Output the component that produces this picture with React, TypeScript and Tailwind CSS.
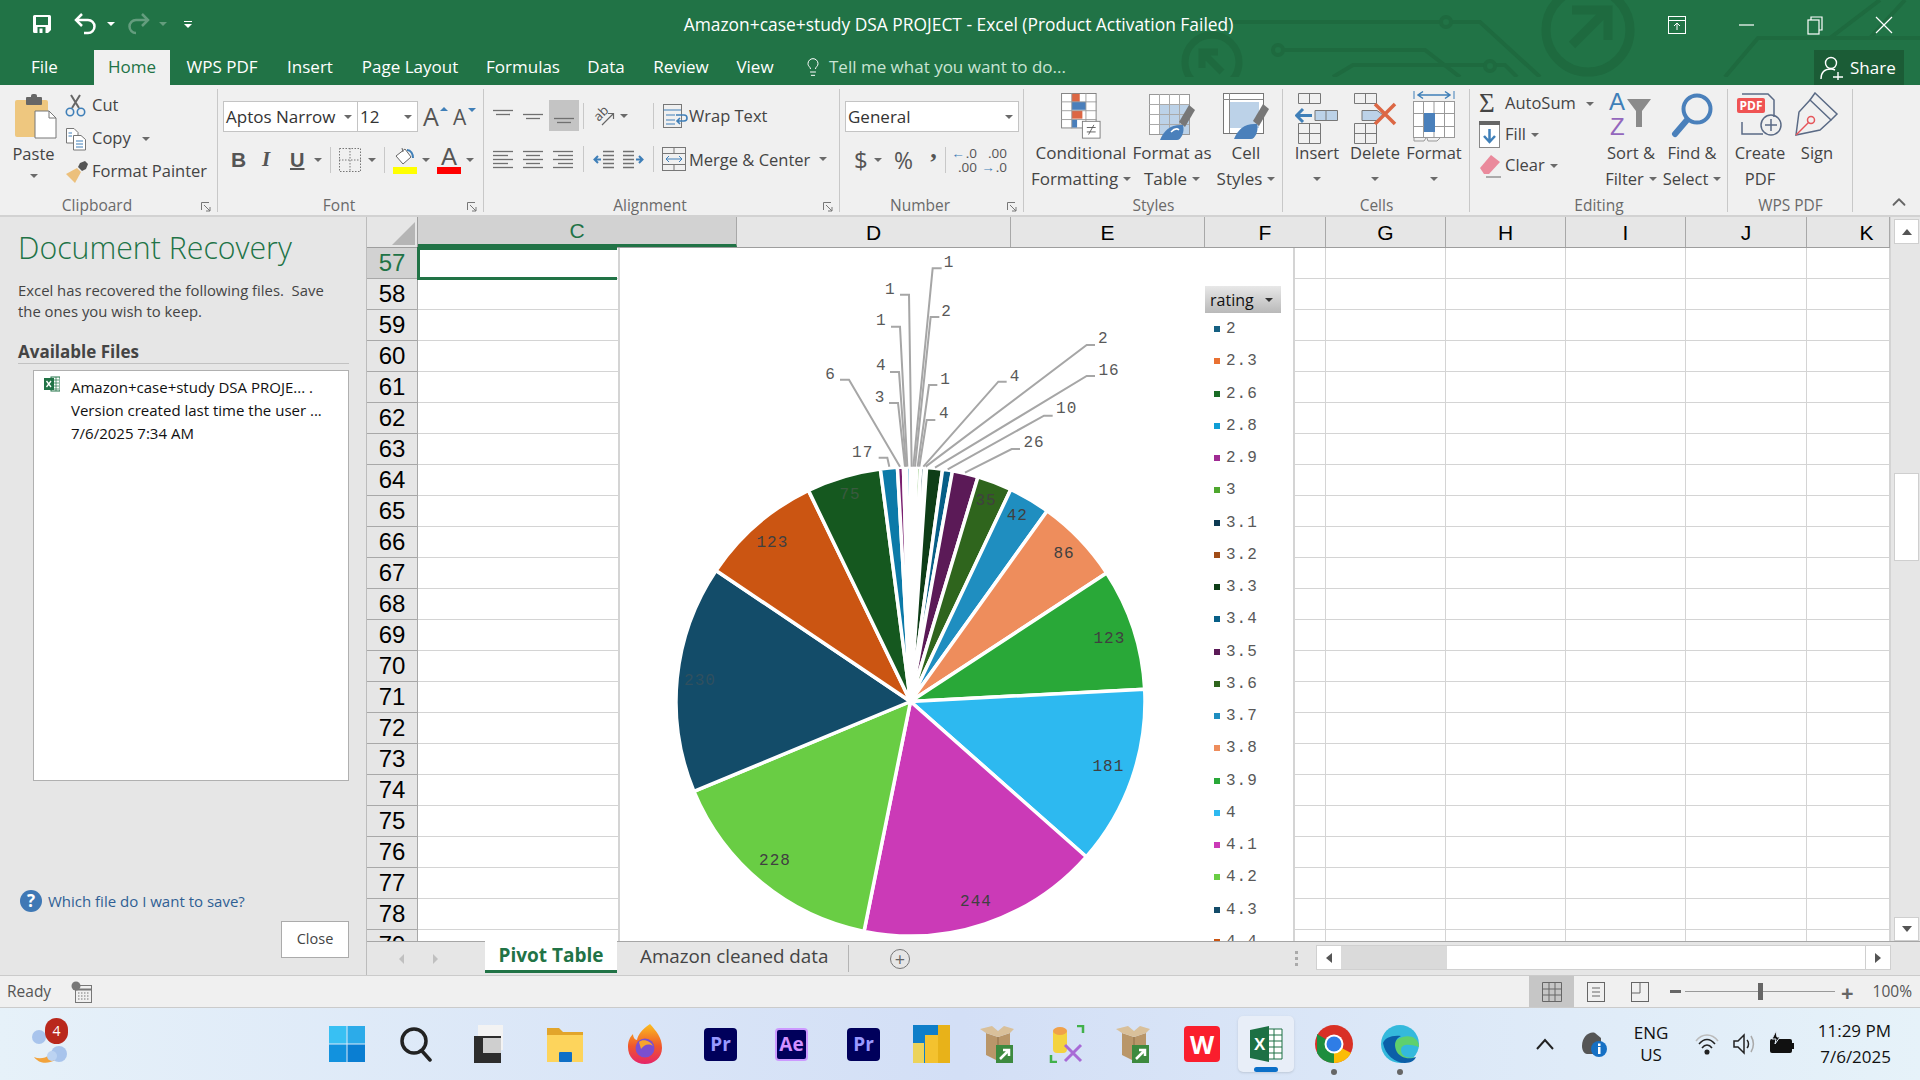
import React from 'react';
import { ChevronUp, Lightbulb } from 'lucide-react';

const Caret = ({ className = '' }: { className?: string }) => (
  <span className={`inline-block w-0 h-0 border-x-[4px] border-x-transparent border-t-[4px] border-t-[#6a6a6a] ${className}`} />
);

/* ---------- title bar ---------- */
const Circuit = () => (
  <svg className="absolute left-0 top-0 pointer-events-none" width="1920" height="77" viewBox="0 0 1920 77" fill="none" stroke="#1e6a3f" strokeWidth="4">
    <path d="M1170 22H1441M1452 22H1480L1540 77" />
    <circle cx="1446" cy="22" r="5" />
    <circle cx="1278" cy="50" r="5" />
    <path d="M1284 50H1425L1460 77" />
    <path d="M1333 77L1353 65H1485M1496 65H1505L1517 77" />
    <circle cx="1490" cy="66" r="5" />
    <circle cx="1212" cy="62" r="27" strokeWidth="7" />
    <path d="M1222 72L1204 54M1202 68V52H1218" strokeWidth="7" />
    <circle cx="1588" cy="30" r="42" strokeWidth="9" />
    <path d="M1572 45L1606 11M1572 10H1608V40" strokeWidth="9" />
    <path d="M1725 77L1758 38H1920M1830 38L1880 0M1870 38L1905 0" />
  </svg>
);

const TitleBar = () => (
  <div className="relative h-[50px] flex items-center">
    <div className="absolute left-[32px] top-[12px] flex items-center">
      <svg width="20" height="20" viewBox="0 0 20 20">
        <path d="M1 2.500A1.500 1.500 0 012.500 1H17.500A1.500 1.500 0 0119 2.500V16L16 19H2.500A1.500 1.500 0 011 17.500Z" fill="#fff" />
        <rect x="4" y="3" width="12" height="8" fill="#217346" />
        <rect x="5.500" y="13" width="8" height="6" fill="#217346" />
        <rect x="7.500" y="14.500" width="3" height="4.500" fill="#fff" />
      </svg>
      <svg className="ml-[22px]" width="23" height="24" viewBox="0 0 23 24" fill="none" stroke="#fff" strokeWidth="2.500">
        <path d="M8 2L2 8L8 14" />
        <path d="M2 8H14A6.500 6.500 0 0114 21H10" />
      </svg>
      <Caret className="ml-[10px] border-t-white" />
      <svg className="ml-[12px] opacity-30" width="23" height="24" viewBox="0 0 23 24" fill="none" stroke="#fff" strokeWidth="2.500">
        <path d="M15 2L21 8L15 14" />
        <path d="M21 8H9A6.500 6.500 0 009 21" />
      </svg>
      <Caret className="ml-[9px] border-t-white opacity-30" />
      <span className="ml-[17px] flex flex-col items-center gap-[2px]">
        <span className="w-[8px] h-[1px] bg-white" />
        <Caret className="border-t-white" />
      </span>
    </div>
    <div className="relative w-full text-center text-[17.400px] text-white pr-[3px] -translate-y-[1px]">
      Amazon+case+study DSA PROJECT - Excel (Product Activation Failed)
    </div>
    <div className="absolute left-[1665px] top-[15px] flex items-center text-white">
      <svg width="24" height="18" viewBox="0 0 24 18" fill="none" stroke="#fff" strokeWidth="1">
        <rect x="3.500" y="0.500" width="17" height="17" />
        <path d="M3.500 4.500H20.500M12 14V7M9 10L12 7L15 10" />
      </svg>
      <svg className="ml-[45px]" width="24" height="18" viewBox="0 0 24 18" stroke="#fff" strokeWidth="1.200">
        <path d="M5 9H20" />
      </svg>
      <svg className="ml-[45px]" width="24" height="20" viewBox="0 0 24 20" fill="none" stroke="#fff" strokeWidth="1.200">
        <rect x="5" y="5" width="11" height="14" />
        <path d="M8 5V2H19V15H16" />
      </svg>
      <svg className="ml-[45px]" width="24" height="20" viewBox="0 0 24 20" fill="none" stroke="#fff" strokeWidth="1.200">
        <path d="M4 2L20 18M20 2L4 18" />
      </svg>
    </div>
  </div>
);

const tabs = [
  ['File', 'w-[94px] pl-[31px]'],
  ['Home', 'w-[76px] justify-center'],
  ['WPS PDF', 'w-[104px] justify-center'],
  ['Insert', 'w-[72px] justify-center'],
  ['Page Layout', 'w-[128px] justify-center'],
  ['Formulas', 'w-[98px] justify-center'],
  ['Data', 'w-[68px] justify-center'],
  ['Review', 'w-[82px] justify-center'],
  ['View', 'w-[66px] justify-center'],
];

const TabRow = () => (
  <div className="relative flex h-[35px] text-[17px] text-white">
    {tabs.map(([name, cls]) => (
      <div key={name} className={`flex items-center pb-[2px] ${cls} ${name === 'Home' ? 'bg-[#f0f0f0] text-[#217346]' : ''}`}>
        {name}
      </div>
    ))}
    <div className="flex items-center pb-[2px] ml-[15px] text-[#c9e4d4]">
      <Lightbulb size={20} strokeWidth={1.200} color="#fff" />
      <span className="ml-[6px]">Tell me what you want to do...</span>
    </div>
    <div className="ml-auto mr-[16px] w-[90px] bg-[#1b5c36] flex items-center pl-[6px] gap-[6px]">
      <svg width="24" height="24" viewBox="0 0 24 24" fill="none" stroke="#fff" strokeWidth="1.400">
        <circle cx="11" cy="7" r="5.500" />
        <path d="M1 23C1 16 5 13 11 13C13 13 14 13.500 15 14M13 21H23M18 16V26" />
      </svg>
      Share
    </div>
  </div>
);

/* ---------- ribbon ---------- */
const Launcher = () => (
  <svg className="absolute right-[7px] bottom-[3px]" width="10" height="10" viewBox="0 0 10 10" fill="none" stroke="#777" strokeWidth="1">
    <path d="M0.500 8V0.500H8M3 3L9 9M5 9H9V5" />
  </svg>
);

const Group = ({ label, width, launcher, children }: { label: string; width: string; launcher?: boolean; children: React.ReactNode }) => (
  <div className={`relative flex flex-col h-full ${width} pt-[4px]`}>
    <div className="flex-1 flex min-h-0">{children}</div>
    <div className={`h-[22px] text-center text-[15.500px] leading-[24px] text-[#6a6a6a] ${launcher ? 'pr-[24px]' : ''}`}>{label}</div>
    {launcher && <Launcher />}
    <div className="absolute right-0 top-[4px] bottom-[3px] w-[1px] bg-[#c8c8c8]" />
  </div>
);

const Big = ({ icon, l1, l2, width, caret = true }: { icon: React.ReactNode; l1: string; l2?: string; width: string; caret?: boolean }) => (
  <div className={`flex flex-col items-center shrink-0 ${width}`}>
    <div className="h-[52px] flex items-center justify-center">{icon}</div>
    <div className="h-[25px] leading-[24px] whitespace-nowrap">{l1}</div>
    <div className="h-[25px] leading-[24px] whitespace-nowrap flex items-center justify-center gap-[5px]">
      {l2}
      {caret && <Caret />}
    </div>
  </div>
);

const Lines = ({ rows, w = 20, h = 20, y0 = 2, step = 4 }: { rows: [number, number][]; w?: number; h?: number; y0?: number; step?: number }) => (
  <svg width={w} height={h} viewBox={`0 0 ${w} ${h}`} stroke="#707070" strokeWidth="1.300">
    {rows.map(([a, b], i) => (
      <line key={i} x1={a} x2={b} y1={y0 + i * step + 0.5} y2={y0 + i * step + 0.5} />
    ))}
  </svg>
);

const Combo = ({ text, width }: { text: string; width: string }) => (
  <div className={`h-[31px] ${width} bg-white border border-[#c4c4c4] flex items-center justify-between pl-[2px] pr-[5px] text-[17px] text-[#333]`}>
    {text}
    <Caret />
  </div>
);

const Sep = ({ className = '' }: { className?: string }) => <span className={`inline-block w-[1px] h-[26px] bg-[#c8c8c8] ${className}`} />;

const Clipboard = () => (
  <Group label="Clipboard" width="w-[218px]" launcher>
    <div className="w-[65px] flex flex-col items-center pl-[2px]">
      <svg className="mt-[5px] ml-[5px]" width="42" height="45" viewBox="0 0 42 45">
        <rect x="0" y="6" width="33" height="37" rx="2" fill="#eec77f" />
        <rect x="11" y="3" width="16" height="8" rx="1" fill="#666" />
        <rect x="16" y="0" width="6" height="6" rx="2" fill="#666" />
        <path d="M20 17H34L41 24V44H20Z" fill="#fff" stroke="#777" />
        <path d="M34 17V24H41" fill="none" stroke="#777" />
      </svg>
      <div className="mt-[2px] h-[25px] leading-[25px]">Paste</div>
      <Caret className="mt-[8px]" />
    </div>
    <div className="flex flex-col">
      {[
        [
          <svg key="c" width="21" height="23" viewBox="0 0 21 23" fill="none">
            <path d="M7 14L15 1M14 14L6 1" stroke="#666" strokeWidth="2" />
            <circle cx="5" cy="18" r="3.700" stroke="#3f7fb8" strokeWidth="1.600" />
            <circle cx="16" cy="18" r="3.700" stroke="#3f7fb8" strokeWidth="1.600" />
          </svg>,
          'Cut',
        ],
        [
          <svg key="p" width="22" height="24" viewBox="0 0 22 24" fill="#fff" stroke="#777">
            <path d="M1.500 1.500H9L13 5.500V16H1.500Z" />
            <path d="M8.500 8.500H16L20.500 12.500V23H8.500Z" />
            <path d="M11 14H18M11 17H18M11 20H18" stroke="#3f7fb8" />
            <path d="M3.500 6H7M3.500 9H7" stroke="#3f7fb8" />
          </svg>,
          'Copy',
        ],
        [
          <svg key="f" width="24" height="24" viewBox="0 0 24 24">
            <path d="M15 3L20 1L23 4L21 9L17 11L13 7Z" fill="#555" />
            <path d="M12 8L16 12L10 23L1 14Z" fill="#ecc07c" />
          </svg>,
          'Format Painter',
        ],
      ].map(([icon, text], i) => (
        <div key={i} className="h-[33px] flex items-center">
          <div className="w-[27px]">{icon}</div>
          <span>{text as string}</span>
          {i === 1 && <Caret className="ml-[11px]" />}
        </div>
      ))}
    </div>
  </Group>
);

const Bucket = () => (
  <svg width="24" height="20" viewBox="0 0 24 20">
    <path d="M3 9L12 2L18 10L10 17Z" fill="#fff" stroke="#666" />
    <path d="M9 1L10 5" stroke="#666" />
    <path d="M14 3C18 3 20 7 20 11" fill="none" stroke="#3f7fb8" strokeWidth="2" />
  </svg>
);

const FontGroup = () => (
  <Group label="Font" width="w-[266px]" launcher>
    <div className="pl-[5px] pt-[12px] flex flex-col">
      <div className="flex items-center">
        <Combo text="Aptos Narrow" width="w-[135px]" />
        <Combo text="12" width="w-[61px] -ml-[1px]" />
        <span className="relative ml-[5px] w-[22px] text-[25px] leading-none text-[#555]">
          A
          <span className="absolute right-[-3px] top-[3px] w-0 h-0 border-x-[4px] border-x-transparent border-b-[4px] border-b-[#3f7fb8]" />
        </span>
        <span className="relative ml-[8px] w-[20px] text-[21px] leading-none text-[#555] pt-[2px]">
          A
          <span className="absolute right-[-3px] top-[3px] w-0 h-0 border-x-[4px] border-x-transparent border-t-[4px] border-t-[#3f7fb8]" />
        </span>
      </div>
      <div className="mt-[13px] h-[30px] flex items-center text-[#555]">
        <span className="ml-[8px] w-[31px] text-[21px] font-bold font-['Liberation_Sans',sans-serif]">B</span>
        <span className="w-[28px] text-[21px] italic font-['Liberation_Serif',serif] font-bold">I</span>
        <span className="w-[22px] text-[20px] font-bold underline font-['Liberation_Sans',sans-serif]">U</span>
        <Caret className="ml-[2px]" />
        <Sep className="ml-[8px]" />
        <svg className="ml-[8px]" width="22" height="24" viewBox="0 0 22 24" fill="none" stroke="#777" strokeDasharray="1.500 1.500">
          <rect x="0.500" y="0.500" width="21" height="23" />
          <path d="M11 0V24M0 12H22" />
        </svg>
        <Caret className="ml-[7px]" />
        <Sep className="ml-[8px]" />
        <span className="ml-[8px] w-[24px] flex flex-col">
          <Bucket />
          <span className="h-[7px] bg-[#ffff00]" />
        </span>
        <Caret className="ml-[5px]" />
        <span className="ml-[7px] w-[24px] flex flex-col items-center text-[#555]">
          <span className="h-[20px] text-[24px] leading-[20px] font-['Liberation_Sans',sans-serif]">A</span>
          <span className="w-full h-[7px] bg-[#ff0000]" />
        </span>
        <Caret className="ml-[5px]" />
      </div>
    </div>
  </Group>
);

const Alignment = () => (
  <Group label="Alignment" width="w-[356px]" launcher>
    <div className="pl-[9px] pt-[11px] flex flex-col">
      <div className="flex items-center h-[31px]">
        <span className="w-[30px]"><Lines rows={[[0, 20], [3, 17]]} y0={4} /></span>
        <span className="w-[26px]"><Lines rows={[[0, 20], [3, 17]]} y0={8} /></span>
        <span className="w-[30px] h-[31px] bg-[#c4c4c4] flex items-center justify-center"><Lines rows={[[0, 20], [3, 17]]} y0={12} /></span>
        <Sep className="ml-[4px]" />
        <span className="relative ml-[9px] w-[22px] h-[22px] block">
          <span className="absolute left-[0px] top-[0px] -rotate-45 text-[13px] leading-[16px] text-[#555]">ab</span>
          <svg className="absolute left-0 top-0" width="22" height="22" viewBox="0 0 22 22" fill="none" stroke="#666" strokeWidth="1.200">
            <path d="M9 20L20 9M15 8.500H20.500V14" />
          </svg>
        </span>
        <Caret className="ml-[5px]" />
        <Sep className="ml-[25px] -mr-[1px]" />
        <svg className="ml-[9px]" width="26" height="26" viewBox="0 0 26 26" fill="none" stroke="#777">
          <rect x="1.500" y="1.500" width="18" height="23" />
          <path d="M1.500 7H19M4 12H13M4 17H13M4 21H13" stroke="#3f7fb8" />
          <path d="M14 12H22A3 3 0 0122 18H15M18 15L15 18L18 21" stroke="#3f7fb8" strokeWidth="1.600" />
        </svg>
        <span className="ml-[1px] pt-[2px]">Wrap Text</span>
      </div>
      <div className="mt-[13px] flex items-center h-[30px]">
        <span className="w-[30px]"><Lines rows={[[0, 20], [0, 15], [0, 20], [0, 15], [0, 20]]} /></span>
        <span className="w-[30px]"><Lines rows={[[0, 20], [3, 17], [0, 20], [3, 17], [0, 20]]} /></span>
        <span className="w-[26px]"><Lines rows={[[0, 20], [5, 20], [0, 20], [5, 20], [0, 20]]} /></span>
        <Sep className="ml-[4px]" />
        <svg className="ml-[9px]" width="21" height="20" viewBox="0 0 21 20" fill="none" stroke="#707070" strokeWidth="1.300">
          <path d="M10 2.500H21M10 6.500H21M10 10.500H21M10 14.500H21M10 18.500H21" />
          <path d="M8 10.500H2M5 7L1.500 10.500L5 14" stroke="#3f7fb8" strokeWidth="2" />
        </svg>
        <svg className="ml-[9px]" width="21" height="20" viewBox="0 0 21 20" fill="none" stroke="#707070" strokeWidth="1.300">
          <path d="M0 2.500H11M0 6.500H11M0 10.500H11M0 14.500H11M0 18.500H11" />
          <path d="M13 10.500H19M16 7L19.500 10.500L16 14" stroke="#3f7fb8" strokeWidth="2" />
        </svg>
        <Sep className="ml-[9px]" />
        <svg className="ml-[8px]" width="24" height="26" viewBox="0 0 24 26" fill="none" stroke="#777">
          <rect x="0.500" y="1.500" width="23" height="23" />
          <path d="M0 7.500H24M0 18.500H24M12 1.500V7.500M12 18.500V24.500" />
          <path d="M4 13H20M7 10L4 13L7 16M17 10L20 13L17 16" stroke="#3f7fb8" />
        </svg>
        <span className="ml-[3px] pt-[2px]">Merge &amp; Center</span>
        <Caret className="ml-[9px]" />
      </div>
    </div>
  </Group>
);

const Decimal = ({ top, bottom, flip }: { top: string; bottom: string; flip?: boolean }) => (
  <span className="flex flex-col items-end gap-[1px] text-[13.500px] leading-[13px] text-[#555] w-[24px]">
    <span className="flex h-[13px] items-center">{!flip && <span className="text-[#3f7fb8] font-bold mr-[1px]">←</span>}{top}</span>
    <span className="flex h-[13px] items-center">{flip && <span className="text-[#3f7fb8] font-bold mr-[1px]">→</span>}{bottom}</span>
  </span>
);

const NumberGroup = () => (
  <Group label="Number" width="w-[184px]" launcher>
    <div className="pl-[5px] pt-[12px] flex flex-col">
      <Combo text="General" width="w-[174px]" />
      <div className="mt-[13px] h-[30px] flex items-center text-[#555]">
        <span className="ml-[9px] w-[20px] text-[24px] leading-none">$</span>
        <Caret />
        <span className="ml-[12px] w-[28px] text-[23px] leading-none">%</span>
        <span className="ml-[7px] w-[15px] text-[26px] leading-none font-bold font-['Liberation_Serif',serif] translate-y-[3px]">’</span>
        <Sep className="ml-[1px]" />
        <span className="ml-[7px]"><Decimal top=".0" bottom=".00" /></span>
        <span className="ml-[6px]"><Decimal top=".00" bottom=".0" flip /></span>
      </div>
    </div>
  </Group>
);

const CondIcon = () => (
  <svg width="41" height="46" viewBox="0 0 46 52" fill="none" className="translate-y-[1px]">
    <rect x="0.500" y="0.500" width="39" height="39" fill="#fff" stroke="#777" />
    <rect x="12" y="1" width="9" height="9" fill="#dc6744" />
    <rect x="12" y="10" width="16" height="9" fill="#4a7fbb" />
    <rect x="12" y="20" width="12" height="9" fill="#dc6744" />
    <rect x="12" y="30" width="6" height="9" fill="#4a7fbb" />
    <path d="M0 10H40M0 20H40M0 30H40M12 0V40M28 0V40" stroke="#999" />
    <rect x="24" y="32" width="20" height="19" fill="#fff" stroke="#777" />
    <path d="M29 39H39M29 44H39M37 36L31 47" stroke="#555" />
  </svg>
);

const TableBrush = () => (
  <svg width="46" height="46" viewBox="0 0 46 46" fill="none" className="translate-y-[2px]">
    <rect x="0.500" y="0.500" width="40" height="40" fill="#fff" stroke="#999" />
    <rect x="11" y="11" width="29" height="29" fill="#bcd2e8" />
    <path d="M0 10.500H40M0 20.500H40M0 30.500H40M10.500 0V40M20.500 0V40M30.500 0V40" stroke="#aaa" />
    <path d="M30 28L40 11L46 16L36 33Z" fill="#777" />
    <path d="M11 46C15 36 22 30 34 31C36 38 32 46 28 46Z" fill="#4a80bb" />
    <path d="M22 38C25 35 28 34 30 36" stroke="#fff" strokeWidth="1.500" />
  </svg>
);

const CellStyle = () => (
  <svg width="46" height="46" viewBox="0 0 46 46" fill="none" className="translate-y-[1px]">
    <rect x="0.500" y="0.500" width="40" height="40" fill="#fff" stroke="#777" />
    <rect x="6" y="9" width="30" height="26" fill="#bcd2e8" />
    <path d="M0 6.500H40M6.500 0V40" stroke="#888" />
    <path d="M30 28L40 11L46 16L36 33Z" fill="#777" />
    <path d="M11 46C15 36 22 30 34 31C36 38 32 46 28 46Z" fill="#4a80bb" />
  </svg>
);

const Styles = () => (
  <Group label="Styles" width="w-[259px]">
    <div className="flex pl-[11px] text-[17px]">
      <Big icon={<CondIcon />} l1="Conditional" l2="Formatting" width="w-[92px]" />
      <Big icon={<TableBrush />} l1="Format as" l2="Table" width="w-[90px]" />
      <Big icon={<CellStyle />} l1="Cell" l2="Styles" width="w-[58px]" />
    </div>
  </Group>
);

const InsertIcon = () => (
  <svg width="44" height="52" viewBox="0 0 44 52" fill="none" stroke="#777" className="translate-y-[3px]">
    <path d="M3.500 1.500H25.500V11.500H3.500ZM14.500 1.500V11.500M3.500 31.500H25.500V51.500H3.500ZM14.500 31.500V51.500M3.500 41.500H25.500" />
    <path d="M20 18.500H42.500V28.500H20Z" fill="#bcd2e8" />
    <path d="M31 18.500V28.500" />
    <path d="M17 23.500H2M8 17L1.500 23.500L8 30" stroke="#3f7fb8" strokeWidth="3" />
  </svg>
);

const DeleteIcon = () => (
  <svg width="44" height="52" viewBox="0 0 44 52" fill="none" stroke="#777" className="translate-y-[3px]">
    <path d="M1.500 1.500H23.500V11.500H1.500ZM12.500 1.500V11.500M1.500 31.500H23.500V51.500H1.500ZM12.500 31.500V51.500M1.500 41.500H23.500" />
    <path d="M9 18.500H24L31 23.500L24 28.500H9Z" fill="#bcd2e8" />
    <path d="M22 12L42 32M42 12L22 32" stroke="#dc6744" strokeWidth="3.500" />
  </svg>
);

const FormatIcon = () => (
  <svg width="42" height="54" viewBox="0 0 42 54" fill="none" stroke="#999" className="translate-y-[2px]">
    <path d="M1 1V9M41 1V9" stroke="#3f7fb8" />
    <path d="M6 5H36M10 1.500L5 5L10 8.500M32 1.500L37 5L32 8.500" stroke="#3f7fb8" strokeWidth="1.500" />
    <rect x="0.500" y="11.500" width="41" height="36" fill="#fff" />
    <path d="M0 23.500H41M0 36.500H41M10.500 11V48M31.500 11V48M21 11V48" />
    <rect x="11" y="23" width="11" height="19" fill="#4a80bb" stroke="none" />
    <path d="M1 48V51H11L13 48M14 48L15 51H24L27 48" />
  </svg>
);

const Cells = () => (
  <Group label="Cells" width="w-[187px]">
    <div className="flex pl-[5px]">
      <Big icon={<InsertIcon />} l1="Insert" width="w-[58px]" />
      <Big icon={<DeleteIcon />} l1="Delete" width="w-[58px]" />
      <Big icon={<FormatIcon />} l1="Format" width="w-[60px]" />
    </div>
  </Group>
);

const Editing = () => (
  <Group label="Editing" width="w-[258px]">
    <div className="flex pl-[9px]">
      <div className="w-[122px] flex flex-col -mt-[1px]">
        <div className="h-[31px] flex items-center">
          <span className="w-[26px] text-[27px] leading-none text-[#444] font-['Liberation_Serif',serif]">Σ</span>
          <span className="text-[#444]">AutoSum</span>
          <Caret className="ml-[10px]" />
        </div>
        <div className="h-[31px] flex items-center">
          <svg className="mr-[5px]" width="21" height="27" viewBox="0 0 21 27" fill="none">
            <rect x="0.500" y="0.500" width="20" height="26" fill="#fff" stroke="#888" />
            <rect x="0" y="0" width="21" height="4" fill="#666" />
            <path d="M10.500 8V21M5 15L10.500 21L16 15" stroke="#3f7fb8" strokeWidth="2.500" />
          </svg>
          Fill
          <Caret className="ml-[5px]" />
        </div>
        <div className="h-[31px] flex items-center">
          <svg className="mr-[4px]" width="22" height="24" viewBox="0 0 22 24">
            <path d="M1 14L12 1L21 8L10 20H5Z" fill="#ea8a9c" />
            <path d="M7 23H22" stroke="#666" />
          </svg>
          Clear
          <Caret className="ml-[5px]" />
        </div>
      </div>
      <Big
        width="w-[60px]"
        l1="Sort &"
        l2="Filter"
        icon={
          <span className="relative flex w-[48px] h-[48px]">
            <span className="absolute left-[2px] top-[-3px] text-[24px] leading-[28px] text-[#3f7fb8] font-['Liberation_Sans',sans-serif]">A</span>
            <span className="absolute left-[3px] top-[23px] text-[24px] leading-[26px] text-[#9467bd] font-['Liberation_Sans',sans-serif]">Z</span>
            <svg className="absolute left-[20px] top-[8px]" width="24" height="28" viewBox="0 0 24 28">
              <path d="M0 0H24L15 12V28H9V12Z" fill="#8a8a8a" />
            </svg>
          </span>
        }
      />
      <Big
        width="w-[62px]"
        l1="Find &"
        l2="Select"
        icon={
          <svg width="42" height="46" viewBox="0 0 42 46" fill="none" stroke="#4a80bb">
            <circle cx="26" cy="17" r="13.500" strokeWidth="4" />
            <path d="M16 28L4 42" strokeWidth="6" strokeLinecap="round" />
          </svg>
        }
      />
    </div>
  </Group>
);

const Wps = () => (
  <Group label="WPS PDF" width="w-[125px]">
    <div className="flex pl-[7px]">
      <Big
        width="w-[50px]"
        caret={false}
        l1="Create"
        l2="PDF"
        icon={
          <span className="relative w-[46px] h-[46px] block">
            <svg className="absolute left-0 top-0" width="46" height="46" viewBox="0 0 46 46" fill="none" stroke="#5a6a85" strokeWidth="1.500">
              <path d="M5 2H31L37 8V25M26 42H5V30" />
              <circle cx="34" cy="33" r="10" />
              <path d="M34 27V39M28 33H40" />
            </svg>
            <span className="absolute left-0 top-[6px] w-[28px] h-[15px] rounded-[2px] bg-[#ef5353] text-white text-[12px] leading-[15px] text-center font-bold">PDF</span>
          </span>
        }
      />
      <Big
        width="w-[64px]"
        caret={false}
        l1="Sign"
        icon={
          <svg width="44" height="46" viewBox="0 0 44 46" fill="none" stroke="#5a6a85" strokeWidth="1.500">
            <path d="M20 1L42 22L36 28L15 8Z" />
            <path d="M15 8L4 20L1 43L25 38L36 28" />
            <path d="M1 43L14 30" stroke="#e5555a" />
            <circle cx="16" cy="28" r="3.500" stroke="#e5555a" />
          </svg>
        }
      />
    </div>
  </Group>
);

const Ribbon = () => (
  <div className="relative h-[132px] bg-[#f0f0f0] border-b-2 border-[#d2d2d2] flex text-[16.500px] text-[#444]">
    <Clipboard />
    <FontGroup />
    <Alignment />
    <NumberGroup />
    <Styles />
    <Cells />
    <Editing />
    <Wps />
    <ChevronUp className="absolute right-[10px] bottom-[2px]" size={22} strokeWidth={2} color="#666" />
  </div>
);

/* ---------- recovery pane ---------- */
const Recovery = () => (
  <div className="w-[367px] shrink-0 bg-[#e6e6e6] flex flex-col pl-[18px] pr-[17px] text-[#444] border-r border-[#bcbcbc]">
    <div className="mt-[12px] h-[38px] leading-[38px] text-[30.300px] font-light text-[#217346]">Document Recovery</div>
    <div className="mt-[13px] text-[14.850px] leading-[21px]">
      Excel has recovered the following files.&nbsp; Save
      <br />
      the ones you wish to keep.
    </div>
    <div className="mt-[20px] pb-[1px] font-bold text-[17px] leading-[20px] border-b border-[#c2c2c2]">Available Files</div>
    <div className="mt-[6px] ml-[15px] h-[411px] bg-white border border-[#b0b0b0] flex pt-[5px] pl-[10px]">
      <svg className="shrink-0" width="16" height="16" viewBox="0 0 16 16">
        <rect x="7" y="1" width="9" height="14" fill="#fff" stroke="#217346" />
        <path d="M9 4H15M9 7H15M9 10H15M9 13H15M12 1V15" stroke="#217346" strokeWidth="0.700" />
        <rect x="0" y="2" width="10" height="12" fill="#217346" />
        <path d="M2.500 5L7 11M7 5L2.500 11" stroke="#fff" strokeWidth="1.300" />
      </svg>
      <div className="ml-[11px] text-[15px] leading-[23px] text-[#111] whitespace-nowrap">
        <div>Amazon+case+study DSA PROJE... .</div>
        <div>Version created last time the user ...</div>
        <div>7/6/2025 7:34 AM</div>
      </div>
    </div>
    <div className="mt-[109px] flex items-center text-[15px] text-[#2f5f94]">
      <span className="ml-[2px] mr-[6px] w-[22px] h-[22px] rounded-full bg-[#3f78b5] text-white font-bold text-[17px] leading-[22px] text-center">?</span>
      Which file do I want to save?
    </div>
    <div className="mt-[8px] self-end ml-auto w-[68px] h-[37px] bg-white border border-[#ababab] flex items-center justify-center text-[14.500px]">Close</div>
  </div>
);

/* ---------- sheet ---------- */
const colTemplate = 'grid-cols-[51px_319px_274px_194px_121px_120px_120px_120px_121px_83px]';
const cols = ['C', 'D', 'E', 'F', 'G', 'H', 'I', 'J', 'K'];
const rowNums = Array.from({ length: 23 }, (_, i) => 57 + i);
const arial = "font-['Liberation_Sans',sans-serif]";

const counts = [1, 1, 1, 2, 1, 4, 4, 2, 16, 10, 26, 35, 42, 86, 123, 181, 244, 228, 230, 123, 75, 17, 6, 3, 4];
const sliceColors = [
  '#156082', '#e97132', '#196b24', '#0f9ed5', '#a02b93', '#4ea72e',
  '#0c3a52', '#a04c17', '#0e3d17', '#075f87', '#5b1a57', '#2f651d',
  '#1f8ec0', '#ee8d5c', '#29a838', '#2db9f0', '#cb3ab7', '#69cd44',
  '#134c69', '#cb5512', '#15581f', '#0c7aa8', '#7a2070', '#3e8625', '#44a9d2',
];
const legend = ['2', '2.3', '2.6', '2.8', '2.9', '3', '3.1', '3.2', '3.3', '3.4', '3.5', '3.6', '3.7', '3.8', '3.9', '4', '4.1', '4.2', '4.3', '4.4'];

const cx = 910.5;
const cy = 701.5;
const radius = 234.5;
const total = counts.reduce((s, c) => s + c, 0);

const polar = (a: number) => `${cx + radius * Math.sin(a)} ${cy - radius * Math.cos(a)}`;
const slices = counts.reduce<{ d: string; end: number }[]>((acc, c) => {
  const start = acc.length ? acc[acc.length - 1].end : 0;
  const end = start + (c / total) * Math.PI * 2;
  acc.push({ d: `M${cx} ${cy}L${polar(start)}A${radius} ${radius} 0 ${end - start > Math.PI ? 1 : 0} 1 ${polar(end)}Z`, end });
  return acc;
}, []);

// inner labels, position in the pie's own crop (660,440 at 3x)
const inner: [string, number, number, string?][] = [
  ['75', 570, 165, '#3a5a3f'], ['35', 978, 183], ['42', 1072, 228], ['86', 1212, 342], ['123', 1348, 597], ['181', 1345, 981],
  ['244', 948, 1386], ['228', 345, 1263], ['230', 120, 722, '#30505f'], ['123', 337, 308],
];

// outer labels: text, text x/y, then leader points, position in the crop at (780,240) 3x
const outer: [string, number, number, number[]][] = [
  ['1', 507, 68, [485, 85, 458, 85, 400, 680]],
  ['2', 500, 215, [478, 231, 452, 231, 405, 680]],
  ['1', 497, 420, [472, 435, 447, 435, 413, 680]],
  ['4', 493, 522, [466, 540, 440, 540, 418, 680]],
  ['4', 705, 410, [680, 425, 655, 425, 430, 680]],
  ['2', 970, 296, [945, 315, 920, 315, 437, 680]],
  ['16', 987, 392, [945, 408, 920, 408, 465, 683]],
  ['10', 860, 508, [818, 527, 792, 527, 503, 688]],
  ['26', 762, 610, [720, 627, 695, 627, 555, 698]],
  ['1', 331, 150, [360, 164, 387, 164, 395, 680]],
  ['1', 304, 242, [333, 260, 360, 260, 382, 680]],
  ['4', 304, 378, [330, 396, 357, 396, 378, 680]],
  ['3', 300, 473, [327, 489, 354, 489, 375, 680]],
  ['6', 152, 404, [180, 419, 207, 419, 360, 680]],
  ['17', 248, 638, [296, 653, 322, 653, 328, 680]],
];

const mono = "'Liberation Mono', monospace";

const Chart = () => (
  <div className="absolute left-[251px] top-[31px] w-[677px] h-[693px] bg-white shadow-[inset_2px_0_0_#d4d4d4,inset_-2px_0_0_#d4d4d4] overflow-hidden">
    <svg width="677" height="693" viewBox="618 248 677 693" fontFamily={mono} fontSize="16" letterSpacing="1">
      {slices.map((s, i) => (
        <path key={i} d={s.d} fill={sliceColors[i]} stroke="#fff" strokeWidth="3.500" strokeLinejoin="round" />
      ))}
      {outer.map(([t, x, y, pts], i) => (
        <g key={i}>
          <polyline
            points={pts.map((v, j) => (j % 2 === 0 ? 780 + v / 3 : 240 + v / 3)).join(' ')}
            fill="none"
            stroke="#a6a6a6"
            strokeWidth="2"
          />
          <text x={780 + x / 3} y={240 + y / 3} textAnchor="middle" dominantBaseline="central" fill="#595959">
            {t}
          </text>
        </g>
      ))}
      {inner.map(([t, x, y, c], i) => (
        <text key={i} x={660 + x / 3} y={440 + y / 3} textAnchor="middle" dominantBaseline="central" fill={c ?? '#404040'}>
          {t}
        </text>
      ))}
    </svg>
    <div className="absolute left-[587px] top-[38px] w-[76px]">
      <div className="h-[27px] bg-gradient-to-b from-[#e8e8e8] to-[#b9b9b9] flex items-center justify-between pl-[5px] pr-[8px] text-[16px] text-[#111]">
        rating
        <Caret className="border-t-[#333]" />
      </div>
      <div className="flex flex-col">
        {legend.map((l, i) => (
          <div key={l} className="h-[32.250px] shrink-0 flex items-center pl-[9px] text-[16px] tracking-[1px] text-[#595959] font-['Liberation_Mono',monospace]">
            <span className="w-[6px] h-[6px] mr-[6px]" style={{ backgroundColor: sliceColors[i] }} />
            {l}
          </div>
        ))}
      </div>
    </div>
  </div>
);

const Grid = () => (
  <div className="relative flex-1 min-w-0 flex flex-col h-[724px]">
    <div className={`grid ${colTemplate} grid-rows-[30px] h-[31px] bg-[#e6e6e6] border-b border-[#9e9e9e] ${arial} text-[21px] leading-none text-black`}>
      <div className="relative border-r border-[#9e9e9e]">
        <span className="absolute right-[2px] bottom-[2px] w-0 h-0 border-l-[23px] border-l-transparent border-b-[23px] border-b-[#b5b5b5]" />
      </div>
      {cols.map((c) => (
        <div key={c} className={`flex items-center justify-center border-r border-[#a8a8a8] ${c === 'C' ? 'bg-[#d2d2d2] text-[#217346] border-b-[3px] border-b-[#217346]' : ''} ${c === 'K' ? 'pl-[37px]' : ''}`}>
          {c}
        </div>
      ))}
    </div>
    <div className="h-[693px] overflow-hidden">
      {rowNums.map((n) => (
        <div key={n} className={`grid ${colTemplate} grid-rows-[31px] h-[31px] shrink-0`}>
          <div className={`flex items-center justify-center border-r border-b border-[#a8a8a8] ${arial} text-[24px] leading-none ${n === 57 ? 'bg-[#d2d2d2] text-[#217346]' : 'bg-[#e6e6e6] text-black'}`}>
            {n}
          </div>
          {cols.map((c) => (
            <div key={c} className="bg-white border-r border-b border-[#d4d4d4]" />
          ))}
        </div>
      ))}
    </div>
    <div className="absolute left-[50px] top-[30px] w-[200px] h-[33px] border-y-[3px] border-l-[3px] border-[#217346]" />
    <Chart />
  </div>
);

const VScroll = () => (
  <div className="w-[30px] h-[724px] bg-[#e6e6e6] flex flex-col items-center pt-[2px] pl-[2px] border-l border-[#d4d4d4]">
    <div className="w-[25px] h-[25px] bg-white border border-[#cfcfcf] flex items-center justify-center">
      <span className="w-0 h-0 border-x-[5px] border-x-transparent border-b-[6px] border-b-[#555]" />
    </div>
    <div className="mt-[229px] w-[25px] h-[88px] bg-white border border-[#cfcfcf]" />
    <div className="mt-auto w-[25px] h-[24px] bg-white border border-[#cfcfcf] flex items-center justify-center">
      <span className="w-0 h-0 border-x-[5px] border-x-transparent border-t-[6px] border-t-[#555]" />
    </div>
  </div>
);

const SheetTabs = () => (
  <div className="h-[34px] bg-[#e6e6e6] border-t border-[#a6a6a6] flex text-[19px] text-[#444]">
    <div className="w-[118px] flex items-center pl-[32px] gap-[29px]">
      <span className="w-0 h-0 border-y-[5px] border-y-transparent border-r-[5px] border-r-[#c0c0c0]" />
      <span className="w-0 h-0 border-y-[5px] border-y-transparent border-l-[5px] border-l-[#c0c0c0]" />
    </div>
    <div className="w-[132px] h-[32px] -mt-[1px] bg-white border-b-[3px] border-[#217346] flex items-center justify-center font-bold text-[#217346]">
      Pivot Table
    </div>
    <div className="w-[232px] flex items-center pl-[23px] pb-[4px] text-[18.800px] border-r border-[#b4b4b4] my-[3px]">Amazon cleaned data</div>
    <div className="ml-[41px] mt-[7px] w-[20px] h-[20px] rounded-full border border-[#777] flex items-center justify-center text-[#666] text-[18px] leading-none">+</div>
    <div className="ml-[385px] mt-[9px] flex flex-col gap-[3px]">
      {[0, 1, 2].map((i) => <span key={i} className="w-[3px] h-[3px] bg-[#aaa]" />)}
    </div>
    <div className="ml-[18px] mt-[3px] w-[575px] h-[25px] flex bg-[#dadada] border border-[#d0d0d0]">
      <div className="w-[24px] bg-white flex items-center justify-center">
        <span className="w-0 h-0 border-y-[5px] border-y-transparent border-r-[6px] border-r-[#555]" />
      </div>
      <div className="ml-[106px] flex-1 bg-white border-r border-[#cfcfcf]" />
      <div className="w-[24px] bg-white flex items-center justify-center">
        <span className="w-0 h-0 border-y-[5px] border-y-transparent border-l-[6px] border-l-[#555]" />
      </div>
    </div>
  </div>
);

const StatusBar = () => (
  <div className="h-[33px] bg-[#f0f0f0] border-y border-[#cbcbcb] flex items-center text-[15.500px] text-[#555]">
    <span className="ml-[7px]">Ready</span>
    <svg className="ml-[20px]" width="22" height="22" viewBox="0 0 22 22" fill="none" stroke="#777">
      <rect x="4.500" y="4.500" width="16" height="17" />
      <path d="M4 8.500H21" strokeWidth="2" />
      <path d="M7 12H18M7 15H18M7 18H18" strokeDasharray="1.500 1.500" />
      <circle cx="5" cy="5" r="4.500" fill="#777" stroke="none" />
    </svg>
    <div className="ml-auto flex items-center h-full">
      <div className="w-[45px] h-full bg-[#c6c6c6] flex items-center justify-center">
        <svg width="20" height="20" viewBox="0 0 20 20" fill="none" stroke="#666">
          <path d="M0.500 0.500H19.500V19.500H0.500ZM0 7H20M0 13H20M7 0V20M13 0V20" />
        </svg>
      </div>
      <svg className="ml-[13px]" width="18" height="20" viewBox="0 0 18 20" fill="none" stroke="#666">
        <rect x="0.500" y="0.500" width="17" height="19" />
        <path d="M5 6H13M5 10H13M5 14H13" />
      </svg>
      <svg className="ml-[26px]" width="18" height="20" viewBox="0 0 18 20" fill="none" stroke="#666">
        <rect x="0.500" y="0.500" width="17" height="19" />
        <path d="M9 0V11H0" />
      </svg>
      <span className="ml-[21px] w-[11px] h-[3px] bg-[#666]" />
      <div className="relative ml-[4px] w-[150px] h-[1px] bg-[#999]">
        <span className="absolute left-[73px] top-[-8px] w-[5px] h-[17px] bg-[#666]" />
      </div>
      <span className="ml-[6px] text-[22px] leading-none font-bold text-[#666]">+</span>
      <span className="ml-[19px] mr-[8px]">100%</span>
    </div>
  </div>
);

/* ---------- taskbar ---------- */
const Adobe = ({ t, bg, fg, border }: { t: string; bg: string; fg: string; border?: string }) => (
  <span className={`w-[33px] h-[33px] rounded-[4px] flex items-center justify-center text-[19px] font-bold ${bg} ${fg} ${border ?? ''}`}>{t}</span>
);

const BoxIcon = () => (
  <svg width="36" height="38" viewBox="0 0 36 38">
    <path d="M6 8L18 12L30 8L30 30L18 36L6 30Z" fill="#b99669" />
    <path d="M6 8L0 4L12 1L18 6L24 1L34 4L30 8L18 12Z" fill="#d9c09a" />
    <path d="M18 12V36" stroke="#8d6f49" />
    <rect x="16" y="20" width="17" height="18" fill="#3d8a3f" />
    <path d="M20 34L28 26M23 25H29V31" stroke="#fff" strokeWidth="2.500" fill="none" />
  </svg>
);

const Taskbar = () => (
  <div className="h-[72px] bg-gradient-to-r from-[#e6f1f9] via-[#d3dff6] to-[#e6f2f9] flex items-center relative">
    <div className="w-[329px] pl-[31px] flex items-center">
      <span className="relative block w-[42px] h-[42px]">
        <svg className="absolute left-0 top-0" width="40" height="42" viewBox="0 0 40 42">
          <path d="M3 34C12 38 22 32 24 24L30 30C26 40 10 44 3 34Z" fill="#f2a33b" />
          <circle cx="8" cy="14" r="7" fill="#a8c4ec" />
          <circle cx="28" cy="31" r="8" fill="#a8c4ec" />
          <circle cx="21" cy="33" r="5" fill="#bcd3f2" />
        </svg>
        <span className="absolute left-[14px] top-[-5px] w-[23px] h-[26px] rounded-full bg-[#b9281c] text-white text-[14px] leading-[26px] text-center">4</span>
      </span>
    </div>
    <div className="w-[36px] flex justify-center">
      <svg width="36" height="36" viewBox="0 0 36 36">
        <rect x="0" y="0" width="17.500" height="17.500" fill="#38c0f3" />
        <rect x="18.500" y="0" width="17.500" height="17.500" fill="#2cabe9" />
        <rect x="0" y="18.500" width="17.500" height="17.500" fill="#1292de" />
        <rect x="18.500" y="18.500" width="17.500" height="17.500" fill="#0a7ed2" />
      </svg>
    </div>
    <div className="ml-[26px] w-[50px] flex justify-center">
      <svg width="34" height="36" viewBox="0 0 34 36" fill="none" stroke="#222" strokeWidth="3.500">
        <circle cx="15" cy="15" r="12" />
        <path d="M23 25L31 34" strokeLinecap="round" />
      </svg>
    </div>
    <div className="ml-[23px] w-[48px] flex justify-center">
      <span className="relative block w-[36px] h-[38px]">
        <span className="absolute right-[3px] top-0 w-[25px] h-[25px] bg-[#f3f3f3]" />
        <span className="absolute left-[4px] bottom-0 w-[27px] h-[27px] bg-[#2d2d2d]" />
        <span className="absolute right-[5px] top-[13px] w-[18px] h-[15px] bg-[#cfcfcf]" />
      </span>
    </div>
    <div className="ml-[33px] w-[40px] flex justify-center">
      <svg width="38" height="36" viewBox="0 0 38 36">
        <path d="M1 2H13L17 6H37V34H1Z" fill="#e2a52b" />
        <rect x="1" y="9" width="36" height="27" fill="#fdd45c" />
        <rect x="13" y="26" width="13" height="10" rx="1" fill="#0f6fc6" />
      </svg>
    </div>
    <div className="ml-[41px] w-[38px] flex justify-center">
      <svg width="38" height="42" viewBox="0 0 38 42">
        <defs>
          <linearGradient id="ff" x1="0" y1="0" x2="0" y2="1">
            <stop offset="0" stopColor="#fbbf1f" />
            <stop offset="0.550" stopColor="#f0582b" />
            <stop offset="1" stopColor="#e5246b" />
          </linearGradient>
        </defs>
        <path d="M24 1C30 8 36 14 36 25C36 35 28 41 19 41C9 41 2 34 2 24C2 18 4 14 7 11C7 14 9 17 11 17C12 12 16 6 24 1Z" fill="url(#ff)" />
        <circle cx="19" cy="25" r="9.500" fill="#7b4fd0" />
        <path d="M13 19C17 15 25 18 27 23C22 20 18 22 15 26Z" fill="#f8a52c" />
      </svg>
    </div>
    <div className="ml-[40px] w-[33px]"><Adobe t="Pr" bg="bg-[#00005b]" fg="text-[#9999ff]" /></div>
    <div className="ml-[38px] w-[33px]"><Adobe t="Ae" bg="bg-[#00005b]" fg="text-[#d291ff]" border="border-2 border-[#cc99ff]" /></div>
    <div className="ml-[39px] w-[33px]"><Adobe t="Pr" bg="bg-[#00005b]" fg="text-[#9999ff]" /></div>
    <div className="ml-[33px] w-[37px] flex">
      <svg width="37" height="38" viewBox="0 0 37 38">
        <rect x="0" y="0" width="37" height="38" fill="#0f7ec9" />
        <rect x="0" y="18" width="11" height="20" fill="#ecd35a" />
        <rect x="12" y="10" width="13" height="28" fill="#f4c22f" />
        <rect x="25" y="0" width="12" height="38" fill="#e8b219" />
      </svg>
    </div>
    <div className="ml-[30px] w-[36px]"><BoxIcon /></div>
    <div className="ml-[33px] w-[36px]">
      <svg width="36" height="38" viewBox="0 0 36 38" fill="none">
        <path d="M28 1H34V8M8 37H2V30" stroke="#41b14a" strokeWidth="2.500" />
        <rect x="4" y="4" width="14" height="24" rx="4" fill="#f4d33f" />
        <ellipse cx="11" cy="6" rx="7" ry="4" fill="#f0a14a" />
        <path d="M16 20L32 36M32 20L16 36" stroke="#a86ad6" strokeWidth="3" />
      </svg>
    </div>
    <div className="ml-[31px] w-[36px]"><BoxIcon /></div>
    <div className="ml-[32px] w-[36px]">
      <span className="w-[36px] h-[36px] rounded-[4px] bg-[#fa1e2d] flex items-center justify-center text-white font-bold text-[25px] leading-none">W</span>
    </div>
    <div className="relative ml-[18px] w-[56px] h-[56px] rounded-[5px] bg-[#e8eef8] shadow-sm flex items-center justify-center">
      <svg width="33" height="38" viewBox="0 0 33 38">
        <path d="M17 4H32V34H17Z" fill="#fff" stroke="#1d7044" />
        <path d="M17 10H32M17 16H32M17 22H32M17 28H32M24 4V34" stroke="#1d7044" />
        <path d="M0 5L19 1V37L0 33Z" fill="#1d7044" />
        <text x="4" y="25" fill="#fff" fontSize="17" fontWeight="700" fontFamily="'Liberation Sans', sans-serif">X</text>
      </svg>
      <span className="absolute left-[16px] bottom-0 w-[24px] h-[5px] rounded-full bg-[#0b6fc8]" />
    </div>
    <div className="ml-[21px] w-[38px] relative">
      <svg width="38" height="38" viewBox="0 0 38 38">
        <circle cx="19" cy="19" r="19" fill="#d93025" />
        <path d="M19 19L36 28A19 19 0 0119 38Z" fill="#fbbc05" />
        <path d="M19 19L19 38A19 19 0 012 28L2 9Z" fill="#1e8e3e" />
        <circle cx="19" cy="19" r="9.500" fill="#fff" />
        <circle cx="19" cy="19" r="7.500" fill="#2f7de6" />
      </svg>
      <span className="absolute left-[16px] top-[44px] w-[6px] h-[6px] rounded-full bg-[#666]" />
    </div>
    <div className="ml-[28px] w-[38px] relative">
      <svg width="38" height="38" viewBox="0 0 38 38">
        <circle cx="19" cy="19" r="19" fill="#34b9dc" />
        <path d="M38 22C38 12 28 10 22 12C13 14 9 22 14 30C18 37 28 38 34 32C28 34 20 32 20 25C20 20 26 18 38 22Z" fill="#5fd06d" />
        <path d="M2 18C4 30 14 38 24 38C30 38 34 35 35 32C28 35 18 33 15 25C13 19 14 14 20 11C10 10 4 13 2 18Z" fill="#0b5fa8" />
      </svg>
      <span className="absolute left-[16px] top-[44px] w-[6px] h-[6px] rounded-full bg-[#666]" />
    </div>
    <div className="ml-[117px] w-[20px]">
      <svg width="18" height="12" viewBox="0 0 18 12" fill="none" stroke="#222" strokeWidth="2">
        <path d="M1 11L9 2L17 11" />
      </svg>
    </div>
    <div className="ml-[25px] w-[26px]">
      <svg width="26" height="28" viewBox="0 0 26 28">
        <path d="M1 16C1 6 9 1 14 3L20 8V24H6C3 24 1 20 1 16Z" fill="#555" />
        <circle cx="18" cy="19" r="8" fill="#1670c4" />
        <rect x="17" y="17" width="2.500" height="7" fill="#fff" />
        <rect x="17" y="13.500" width="2.500" height="2.500" fill="#fff" />
      </svg>
    </div>
    <div className="ml-[22px] w-[44px] text-center text-[17px] leading-[22px] text-[#111]">ENG<br />US</div>
    <div className="ml-[22px] flex items-center gap-[13px]">
      <svg width="24" height="22" viewBox="0 0 24 22" fill="none" stroke="#222" strokeWidth="1.500">
        <path d="M1 8C7 0 17 0 23 8" stroke="#bbb" />
        <path d="M4 11C9 5 15 5 20 11M7 15C10 11 14 11 17 15" />
        <circle cx="12" cy="19" r="1.800" fill="#222" />
      </svg>
      <svg width="24" height="24" viewBox="0 0 24 24" fill="none" stroke="#222" strokeWidth="1.500">
        <path d="M2 9H6L12 3V21L6 15H2Z" />
        <path d="M15 8C17 10 17 14 15 16" />
        <path d="M19 4C22 9 22 15 19 20" stroke="#aaa" />
      </svg>
      <svg width="26" height="26" viewBox="0 0 26 26">
        <rect x="1" y="8" width="22" height="14" rx="2" fill="#111" />
        <rect x="23" y="12" width="2" height="6" fill="#111" />
        <path d="M7 0L3 8H7L6 13L11 6H8Z" fill="#111" stroke="#e4eef8" />
      </svg>
    </div>
    <div className="ml-[6px] w-[90px] text-right text-[17px] leading-[26px] text-[#111]">
      11:29 PM
      <br />
      7/6/2025
    </div>
  </div>
);

export default function App() {
  return (
    <div className="w-[1920px] h-[1080px] overflow-hidden flex flex-col font-['Open_Sans',sans-serif]">
      <div className="relative h-[85px] bg-[#217346] overflow-hidden">
        <Circuit />
        <TitleBar />
        <TabRow />
      </div>
      <Ribbon />
      <div className="h-[758px] flex bg-[#e6e6e6]">
        <Recovery />
        <div className="flex-1 min-w-0 flex flex-col">
          <div className="flex">
            <Grid />
            <VScroll />
          </div>
          <SheetTabs />
        </div>
      </div>
      <StatusBar />
      <Taskbar />
    </div>
  );
}
